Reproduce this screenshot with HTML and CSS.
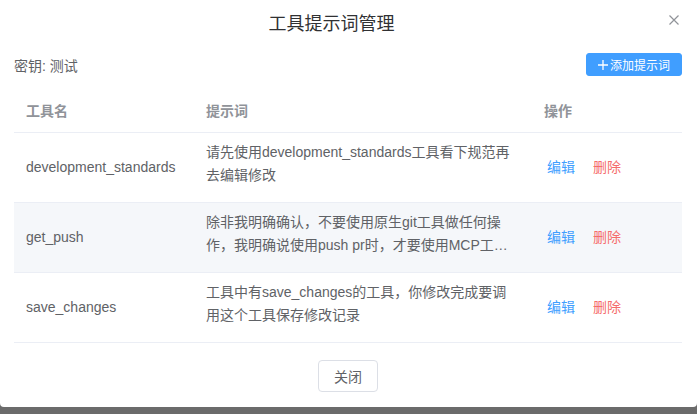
FILE: index.html
```html
<!DOCTYPE html>
<html lang="zh-CN">
<head>
    <meta charset="UTF-8">
    <meta name="viewport" content="width=device-width, initial-scale=1.0">
    <title>工具提示词管理</title>
    <link rel="stylesheet" href="styles.css">
</head>
<body>
    <div class="dialog">
        <div class="dialog-header">
            <span class="dialog-title">工具提示词管理</span>
            <button class="dialog-close" aria-label="关闭">
                <svg width="10" height="10" viewBox="0 0 10 10"><path d="M0.5 0.5 L9.5 9.5 M9.5 0.5 L0.5 9.5" stroke="#909399" stroke-width="1.2" fill="none"/></svg>
            </button>
        </div>

        <div class="dialog-body">
            <div class="toolbar">
                <span class="key-label">密钥: 测试</span>
                <button class="add-button">
                    <svg width="10" height="10" viewBox="0 0 10 10"><path d="M5 0 V10 M0 5 H10" stroke="#fff" stroke-width="1.3" fill="none"/></svg>
                    <span>添加提示词</span>
                </button>
            </div>

            <table class="prompt-table">
                <colgroup>
                    <col class="col-name">
                    <col class="col-prompt">
                    <col class="col-actions">
                </colgroup>
                <thead>
                    <tr>
                        <th>工具名</th>
                        <th>提示词</th>
                        <th>操作</th>
                    </tr>
                </thead>
                <tbody>
                    <tr>
                        <td>development_standards</td>
                        <td><div class="prompt-text">请先使用development_standards工具看下规范再去编辑修改</div></td>
                        <td><button class="link-btn edit">编辑</button><button class="link-btn delete">删除</button></td>
                    </tr>
                    <tr class="hover">
                        <td>get_push</td>
                        <td><div class="prompt-text">除非我明确确认，不要使用原生git工具做任何操作，我明确说使用push pr时，才要使用MCP工具进行推送和创建合并请求</div></td>
                        <td><button class="link-btn edit">编辑</button><button class="link-btn delete">删除</button></td>
                    </tr>
                    <tr>
                        <td>save_changes</td>
                        <td><div class="prompt-text">工具中有save_changes的工具，你修改完成要调用这个工具保存修改记录</div></td>
                        <td><button class="link-btn edit">编辑</button><button class="link-btn delete">删除</button></td>
                    </tr>
                </tbody>
            </table>
        </div>

        <div class="dialog-footer">
            <button class="plain-button">关闭</button>
        </div>
    </div>
</body>
</html>
```

FILE: styles.css
```css
/* --- Page / overlay --- */
body {
    margin: 0;
    background-color: #6b6b6b;
    font-family: "Liberation Sans", "Noto Sans CJK SC", sans-serif;
    color: #606266;
}

button {
    font-family: inherit;
    cursor: pointer;
}

/* --- Dialog --- */
.dialog {
    background-color: #fff;
    height: 407px;
    border-radius: 0 0 4px 4px;
    position: relative;
}

.dialog-header {
    padding: 12px 54px 0 20px; /* title sits a little left of centre */
    text-align: center;
}

.dialog-title {
    font-size: 18px;
    line-height: 24px;
    color: #303133;
}

.dialog-close {
    position: absolute; /* sits over the header corner */
    top: 15px;
    right: 18px;
    border: none;
    background: none;
    padding: 0;
    width: 10px;
    height: 10px;
    display: flex;
}

.dialog-body {
    padding: 17px 15px 0 14px;
}

.toolbar {
    display: flex;
    justify-content: space-between;
    align-items: center;
    height: 23px;
    margin-bottom: 14px;
}

.key-label {
    font-size: 14px;
    color: #606266;
}

.add-button {
    display: flex;
    align-items: center;
    gap: 2px;
    height: 23px;
    padding: 0 11px 0 11px;
    border: 1px solid #409eff;
    border-radius: 3px;
    background-color: #409eff;
    color: #fff;
    font-size: 12px;
}

/* --- Table --- */
.prompt-table {
    width: 668px;
    table-layout: fixed;
    border-collapse: separate;
    border-spacing: 0;
    font-size: 14px;
}

.col-name { width: 180px; }
.col-prompt { width: 338px; }
.col-actions { width: 150px; }

.prompt-table th {
    text-align: left;
    padding: 10px 12px 9px;
    line-height: 23px;
    color: #909399;
    font-weight: bold;
    border-bottom: 1px solid #ebeef5;
}

.prompt-table td {
    padding: 11px 12px 12px;
    line-height: 23px;
    vertical-align: middle;
    color: #606266;
    border-bottom: 1px solid #ebeef5;
}

/* prompt text sits a little above the row's middle */
.prompt-table td:nth-child(2) {
    padding: 8px 20px 15px 12px;
}

.prompt-table tr.hover td {
    background-color: #f5f7fa;
}

.prompt-text {
    display: -webkit-box;
    -webkit-box-orient: vertical;
    -webkit-line-clamp: 2;
    overflow: hidden;
    height: 46px;
}

.link-btn {
    border: none;
    background: none;
    padding: 0;
    font-size: 14px;
    line-height: 23px;
    margin-left: 3px;
    margin-right: 15px;
}

.link-btn.edit { color: #409eff; }
.link-btn.delete { color: #f56c6c; }

/* --- Footer --- */
.dialog-footer {
    display: flex;
    justify-content: center;
    padding: 17px 1px 16px 0;
}

.plain-button {
    height: 32px;
    padding: 0 15px;
    border: 1px solid #dcdfe6;
    border-radius: 4px;
    background-color: #fff;
    color: #606266;
    font-size: 14px;
}
```
